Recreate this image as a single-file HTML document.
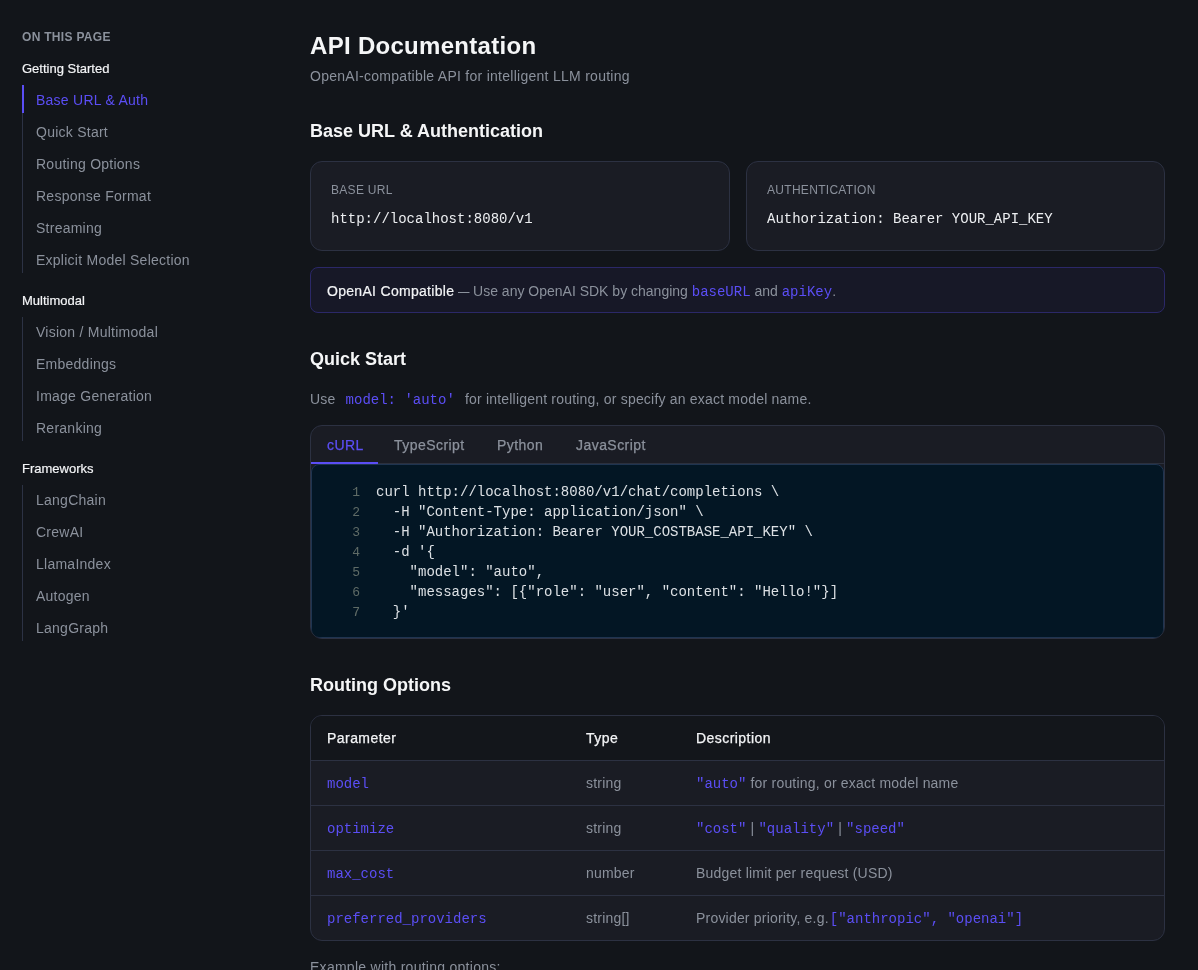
<!DOCTYPE html>
<html><head><meta charset="utf-8">
<style>
*{box-sizing:border-box;margin:0;padding:0}
html,body{width:1198px;height:970px;overflow:hidden;background:#12151a;font-family:"Liberation Sans",sans-serif;color:#e5e7eb}
.mono{font-family:"Liberation Mono",monospace}
.side{position:absolute;left:0;top:0;width:260px;height:970px;will-change:transform}
.side .hd{position:absolute;left:22px;font-size:12px;font-weight:bold;color:#8b919c;letter-spacing:0.3px;white-space:nowrap}
.side .grp{position:absolute;left:22px;font-size:13px;color:#f3f4f6;white-space:nowrap;-webkit-text-stroke:0.2px currentColor}
.side .it{position:absolute;left:36px;font-size:14px;color:#8b919c;white-space:nowrap;letter-spacing:0.25px}
.side .it.act{color:#5b4ef5}
.side .vl{position:absolute;left:22px;width:1px;background:#2c3244}
.side .ab{position:absolute;left:22px;width:2px;background:#5b4ef5}
.main{position:absolute;left:310px;top:0;width:855px;height:970px;will-change:transform}
.abs{position:absolute;white-space:nowrap}
h1{position:absolute;left:0;font-size:24px;font-weight:bold;color:#f5f6f7;white-space:nowrap;letter-spacing:0.3px}
h2{position:absolute;left:0;font-size:18px;font-weight:bold;color:#f5f6f7;white-space:nowrap}
.sub{font-size:14px;color:#8b919c;letter-spacing:0.27px}
.card{position:absolute;background:#1a1c24;border:1px solid #2c3142;border-radius:12px}
.lbl{position:absolute;font-size:12px;color:#8b919c;letter-spacing:0.3px}
.val{position:absolute;font-family:"Liberation Mono",monospace;font-size:14px;color:#eceef1}
.callout{position:absolute;left:0;top:267px;width:855px;height:46px;background:#171827;border:1px solid #2b2868;border-radius:8px}
.acc{color:#5b4ef5}
.tabs{position:absolute;left:0;top:425px;width:855px;height:214px;background:#1a1c24;border:1px solid #2c3142;border-radius:12px;overflow:hidden}
.tab{position:absolute;top:11px;letter-spacing:0.45px;-webkit-text-stroke:0.25px currentColor;font-size:14px;color:#8b919c}
.code{position:absolute;left:0;top:38px;width:853px;height:174px;background:#031624;border:1px solid #1f3450;border-radius:8px}
.ln{position:absolute;font-family:"Liberation Mono",monospace;font-size:13px;color:#5f6b66;text-align:right;width:20px}
.cl{position:absolute;font-family:"Liberation Mono",monospace;font-size:14px;color:#dce0e4;white-space:pre}
.tbl{position:absolute;left:0;top:715px;width:855px;height:226px;border:1px solid #2c3142;border-radius:12px;overflow:hidden;background:#1a1c24}
.row{position:absolute;left:0;width:853px;height:45px;border-top:1px solid #2c3142}
.th{position:absolute;font-size:14px;color:#f3f4f6;-webkit-text-stroke:0.25px currentColor;letter-spacing:0.45px}
.td{position:absolute;font-size:14px;color:#8b919c;white-space:nowrap;letter-spacing:0.2px}
.td .acc{letter-spacing:0}
.tdm{position:absolute;font-family:"Liberation Mono",monospace;font-size:14px;color:#5b4ef5;white-space:nowrap}
</style></head><body>
<div class="side">
  <div class="hd" style="top:30px">ON THIS PAGE</div>
  <div class="grp" style="top:61px">Getting Started</div>
  <div class="vl" style="top:85px;height:188px"></div>
  <div class="ab" style="top:85px;height:28px"></div>
  <div class="it act" style="top:92px">Base URL &amp; Auth</div>
  <div class="it" style="top:124px">Quick Start</div>
  <div class="it" style="top:156px">Routing Options</div>
  <div class="it" style="top:188px">Response Format</div>
  <div class="it" style="top:220px">Streaming</div>
  <div class="it" style="top:252px">Explicit Model Selection</div>
  <div class="grp" style="top:293px">Multimodal</div>
  <div class="vl" style="top:317px;height:124px"></div>
  <div class="it" style="top:324px">Vision / Multimodal</div>
  <div class="it" style="top:356px">Embeddings</div>
  <div class="it" style="top:388px">Image Generation</div>
  <div class="it" style="top:420px">Reranking</div>
  <div class="grp" style="top:461px">Frameworks</div>
  <div class="vl" style="top:485px;height:156px"></div>
  <div class="it" style="top:492px">LangChain</div>
  <div class="it" style="top:524px">CrewAI</div>
  <div class="it" style="top:556px">LlamaIndex</div>
  <div class="it" style="top:588px">Autogen</div>
  <div class="it" style="top:620px">LangGraph</div>
</div>
<div class="main">
  <h1 style="top:32px">API Documentation</h1>
  <div class="abs sub" style="top:68px">OpenAI-compatible API for intelligent LLM routing</div>
  <h2 style="top:121px">Base URL &amp; Authentication</h2>
  <div class="card" style="left:0;top:161px;width:420px;height:90px">
    <div class="lbl" style="left:20px;top:21px">BASE URL</div>
    <div class="val" style="left:20px;top:49px">http://localhost:8080/v1</div>
  </div>
  <div class="card" style="left:436px;top:161px;width:419px;height:90px">
    <div class="lbl" style="left:20px;top:21px">AUTHENTICATION</div>
    <div class="val" style="left:20px;top:49px">Authorization: Bearer YOUR_API_KEY</div>
  </div>
  <div class="callout">
    <div class="abs" style="left:16px;top:15px;font-size:14px;color:#8b919c"><span style="color:#f3f4f6;letter-spacing:0.3px;-webkit-text-stroke:0.2px currentColor">OpenAI Compatible</span> <span style="display:inline-block;width:11px;overflow:visible;transform:scaleX(0.82);transform-origin:0 0">—</span> Use any OpenAI SDK by changing <span class="mono acc" style="letter-spacing:0">baseURL</span> and <span class="mono acc" style="letter-spacing:0">apiKey</span>.</div>
  </div>
  <h2 style="top:349px">Quick Start</h2>
  <div class="abs" style="left:0;top:391px;font-size:14px;color:#8b919c;letter-spacing:0.2px">Use <span class="mono acc" style="padding:0 6px;letter-spacing:0">model: 'auto'</span> for intelligent routing, or specify an exact model name.</div>
  <div class="tabs">
    <div class="tab" style="left:16px;color:#5b4ef5">cURL</div>
    <div style="position:absolute;left:0;top:37px;width:853px;height:1px;background:#2b303d"></div>
    <div style="position:absolute;left:0;top:36px;width:67px;height:2px;background:#5b4ef5"></div>
    <div class="tab" style="left:83px">TypeScript</div>
    <div class="tab" style="left:186px">Python</div>
    <div class="tab" style="left:265px">JavaScript</div>
    <div class="code">
      <div class="ln" style="left:28px;top:20px">1</div>
      <div class="ln" style="left:28px;top:40px">2</div>
      <div class="ln" style="left:28px;top:60px">3</div>
      <div class="ln" style="left:28px;top:80px">4</div>
      <div class="ln" style="left:28px;top:100px">5</div>
      <div class="ln" style="left:28px;top:120px">6</div>
      <div class="ln" style="left:28px;top:140px">7</div>
      <div class="cl" style="left:64px;top:19px">curl http://localhost:8080/v1/chat/completions \</div>
      <div class="cl" style="left:64px;top:39px">  -H "Content-Type: application/json" \</div>
      <div class="cl" style="left:64px;top:59px">  -H "Authorization: Bearer YOUR_COSTBASE_API_KEY" \</div>
      <div class="cl" style="left:64px;top:79px">  -d '{</div>
      <div class="cl" style="left:64px;top:99px">    "model": "auto",</div>
      <div class="cl" style="left:64px;top:119px">    "messages": [{"role": "user", "content": "Hello!"}]</div>
      <div class="cl" style="left:64px;top:139px">  }'</div>
    </div>
  </div>
  <h2 style="top:675px">Routing Options</h2>
  <div class="tbl">
    <div style="position:absolute;left:0;top:0;width:853px;height:45px;background:#13161b"></div>
    <div class="th" style="left:16px;top:14px">Parameter</div>
    <div class="th" style="left:275px;top:14px">Type</div>
    <div class="th" style="left:385px;top:14px">Description</div>
    <div class="row" style="top:44px">
      <div class="tdm" style="left:16px;top:15px">model</div>
      <div class="td" style="left:275px;top:14px">string</div>
      <div class="td" style="left:385px;top:14px"><span class="mono acc">"auto"</span> for routing, or exact model name</div>
    </div>
    <div class="row" style="top:89px">
      <div class="tdm" style="left:16px;top:15px">optimize</div>
      <div class="td" style="left:275px;top:14px">string</div>
      <div class="td" style="left:385px;top:14px"><span class="mono acc">"cost"</span> | <span class="mono acc">"quality"</span> | <span class="mono acc">"speed"</span></div>
    </div>
    <div class="row" style="top:134px">
      <div class="tdm" style="left:16px;top:15px">max_cost</div>
      <div class="td" style="left:275px;top:14px">number</div>
      <div class="td" style="left:385px;top:14px">Budget limit per request (USD)</div>
    </div>
    <div class="row" style="top:179px">
      <div class="tdm" style="left:16px;top:15px">preferred_providers</div>
      <div class="td" style="left:275px;top:14px">string[]</div>
      <div class="td" style="left:385px;top:14px">Provider priority, e.g. <span class="mono acc" style="margin-left:-3px">["anthropic", "openai"]</span></div>
    </div>
  </div>
  <div class="abs" style="left:0;top:959px;font-size:14px;color:#8b919c;letter-spacing:0.27px">Example with routing options:</div>
</div>
</body></html>
